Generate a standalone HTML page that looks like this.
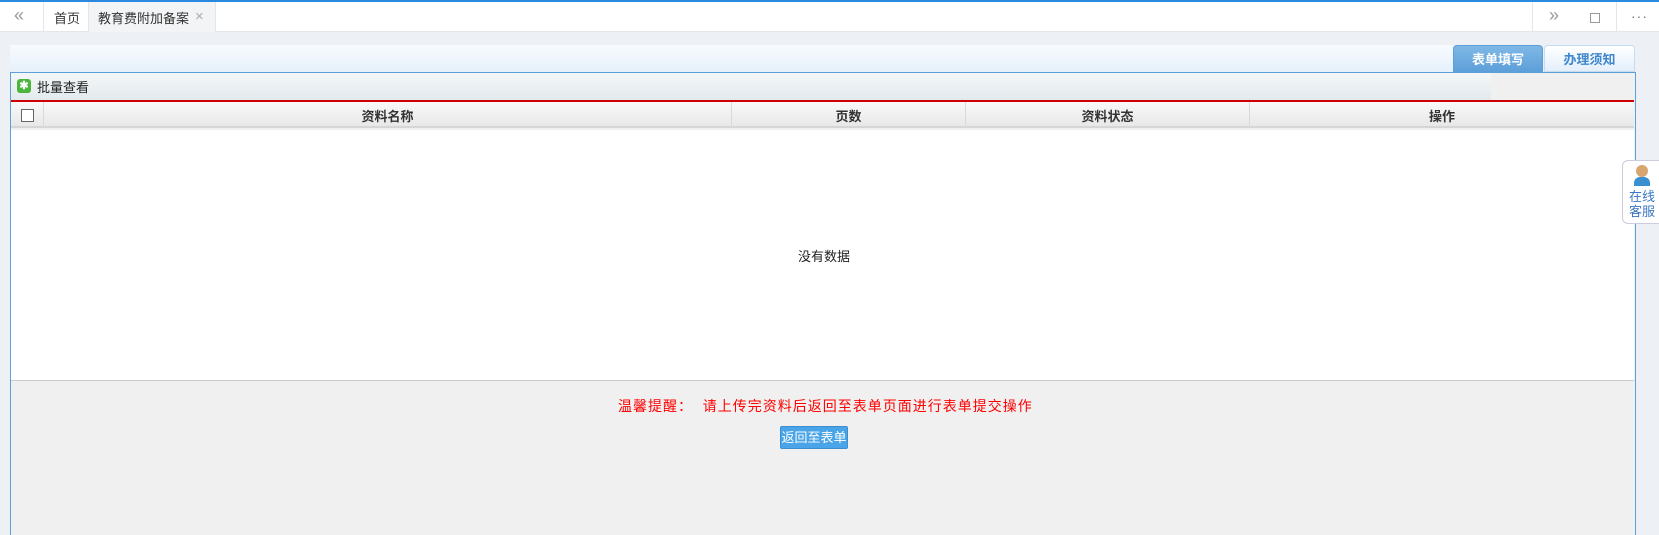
<!DOCTYPE html>
<html><head><meta charset="utf-8"><style>
*{margin:0;padding:0;box-sizing:border-box}
body{width:1659px;height:535px;background:#edf1f5;font-family:"Liberation Sans","Noto Sans CJK SC",sans-serif;font-size:12px;color:#333;position:relative;overflow:hidden}
.a{position:absolute}
</style></head><body>
<div class="a" style="left:0;top:0;width:1659px;height:2px;background:#2a8ae0"></div>
<div class="a" style="left:0;top:2px;width:1659px;height:30px;background:#fff;border-bottom:1px solid #e3e6ea"></div>
<div class="a" style="left:14px;top:5px;font-size:18px;color:#999">«</div>
<div class="a" style="left:43px;top:2px;width:1px;height:30px;background:#e3e6ea"></div>
<div class="a" style="left:54px;top:8px;font-size:13px">首页</div>
<div class="a" style="left:88px;top:2px;width:128px;height:30px;background:#f3f4f6;border-left:1px solid #e3e6ea;border-right:1px solid #e3e6ea"></div>
<div class="a" style="left:98px;top:8px;font-size:13px">教育费附加备案</div>
<div class="a" style="left:195px;top:8px;font-size:15px;color:#aaa">×</div>
<div class="a" style="left:1532px;top:2px;width:1px;height:30px;background:#e3e6ea"></div>
<div class="a" style="left:1616px;top:2px;width:1px;height:30px;background:#e3e6ea"></div>
<div class="a" style="left:1549px;top:5px;font-size:18px;color:#999">»</div>
<div class="a" style="left:1590px;top:13px;width:10px;height:10px;border:1px solid #999"></div>
<div class="a" style="left:1631px;top:8px;font-size:14px;color:#777;letter-spacing:1px">···</div>

<div class="a" style="left:10px;top:45px;width:1443px;height:27px;background:linear-gradient(#f8fbfe,#e6f1fb)"></div>
<div class="a" style="left:1453px;top:45px;width:90px;height:28px;background:linear-gradient(#7fb8e6,#5c9fd9);border:1px solid #5c9fd9;border-radius:4px 4px 0 0;color:#fff;font-weight:bold;font-size:13px;text-align:center;line-height:27px">表单填写</div>
<div class="a" style="left:1544px;top:45px;width:91px;height:27px;background:linear-gradient(#fff,#e3effb);border:1px solid #c8dcef;border-radius:4px 4px 0 0;color:#3f87cf;font-weight:bold;font-size:13px;text-align:center;line-height:27px">办理须知</div>

<div class="a" style="left:10px;top:72px;width:1626px;height:463px;border:1px solid #5c9fd9;border-bottom:none;background:#f0f0f0"></div>
<div class="a" style="left:11px;top:73px;width:1480px;height:27px;background:linear-gradient(#f4f7f8,#e2eaed)"></div>
<div class="a" style="left:17px;top:79px;width:14px;height:14px;background:#4cb63c;border-radius:3px;color:#fff;font-size:11px;line-height:14px;text-align:center;font-weight:bold">✱</div>
<div class="a" style="left:37px;top:77px;font-size:13px;color:#222">批量查看</div>
<div class="a" style="left:11px;top:100px;width:1623px;height:2px;background:#c00"></div>
<div class="a" style="left:11px;top:102px;width:1623px;height:26px;background:linear-gradient(#f9f9f9,#e8e8e8);border-bottom:2px solid #d6d6d6"></div>
<div class="a" style="left:21px;top:109px;width:13px;height:13px;border:1px solid #666;background:#fff"></div>
<div class="a" style="left:43px;top:102px;width:1px;height:26px;background:#d9d9d9"></div>
<div class="a" style="left:731px;top:102px;width:1px;height:26px;background:#d9d9d9"></div>
<div class="a" style="left:965px;top:102px;width:1px;height:26px;background:#d9d9d9"></div>
<div class="a" style="left:1249px;top:102px;width:1px;height:26px;background:#d9d9d9"></div>
<div class="a" style="left:44px;top:106px;width:687px;text-align:center;font-weight:bold;font-size:13px">资料名称</div>
<div class="a" style="left:732px;top:106px;width:233px;text-align:center;font-weight:bold;font-size:13px">页数</div>
<div class="a" style="left:966px;top:106px;width:283px;text-align:center;font-weight:bold;font-size:13px">资料状态</div>
<div class="a" style="left:1250px;top:106px;width:384px;text-align:center;font-weight:bold;font-size:13px">操作</div>
<div class="a" style="left:11px;top:130px;width:1623px;height:251px;background:#fff;border-bottom:1px solid #ccc"></div>
<div class="a" style="left:798px;top:246px;font-size:13px;color:#222">没有数据</div>
<div class="a" style="left:618px;top:396px;font-size:14px;color:#f00;letter-spacing:1px">温馨提醒：&nbsp; 请上传完资料后返回至表单页面进行表单提交操作</div>
<div class="a" style="left:780px;top:426px;width:68px;height:23px;background:#4aa5e8;border:1px solid #3a8fd0;border-radius:2px;color:#fff;font-size:13px;text-align:center;line-height:21px">返回至表单</div>

<div class="a" style="left:1622px;top:160px;width:40px;height:64px;background:#fff;border:1px solid #ccd;border-radius:6px 0 0 6px"></div>
<div class="a" style="left:1634px;top:165px;width:16px;height:22px;"><div style="width:12px;height:12px;border-radius:50%;background:#d9a56f;margin:0 2px"></div><div style="width:16px;height:9px;background:#3a8fd0;border-radius:6px 6px 0 0"></div></div>
<div class="a" style="left:1627px;top:189px;font-size:13px;color:#3a77c0;line-height:15px;width:30px;text-align:center">在线<br>客服</div>
</body></html>
